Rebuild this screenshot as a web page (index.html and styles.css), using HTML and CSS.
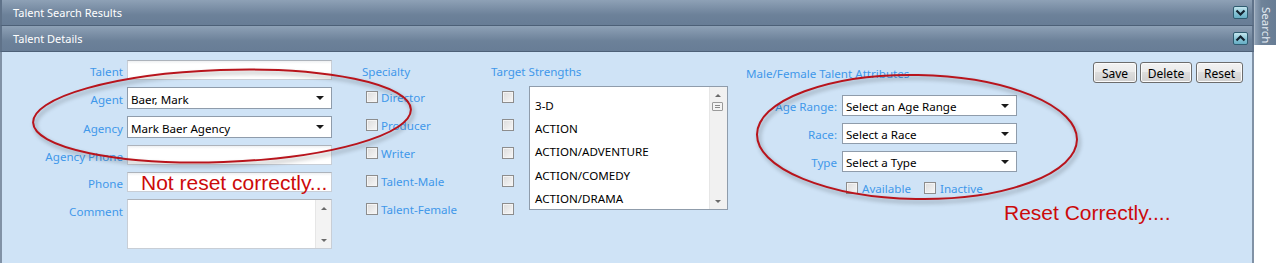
FILE: index.html
```html
<!DOCTYPE html>
<html>
<head>
<meta charset="utf-8">
<title>Talent Details</title>
<link rel="stylesheet" href="styles.css">
</head>
<body>
<div class="page">
  <div class="main">
    <div class="bar">
      <span class="bar-title">Talent Search Results</span>
      <span class="toggle"><svg width="15" height="13" viewBox="0 0 15 13"><polyline points="3.5,4.5 7.5,8.5 11.5,4.5" fill="none" stroke="#13222f" stroke-width="2.2"/></svg></span>
    </div>
    <div class="bar">
      <span class="bar-title">Talent Details</span>
      <span class="toggle"><svg width="15" height="13" viewBox="0 0 15 13"><polyline points="3.5,8.5 7.5,4.5 11.5,8.5" fill="none" stroke="#13222f" stroke-width="2.2"/></svg></span>
    </div>
    <div class="content">
      <div class="col-form">
        <span class="lbl">Talent</span>
        <div class="field input"></div>
        <span class="lbl">Agent</span>
        <div class="field select"><span class="val">Baer, Mark</span><i class="arrow"></i></div>
        <span class="lbl">Agency</span>
        <div class="field select"><span class="val">Mark Baer Agency</span><i class="arrow"></i></div>
        <span class="lbl">Agency Phone</span>
        <div class="field input"></div>
        <span class="lbl">Phone</span>
        <div class="field input"></div>
        <span class="lbl lbl-top">Comment</span>
        <div class="field textarea">
          <div class="vscroll small"><i class="up"></i><i class="down"></i></div>
        </div>
      </div>

      <div class="col-spec">
        <div class="col-title">Specialty</div>
        <div class="chk-row"><span class="chk"></span><span class="chk-lbl">Director</span></div>
        <div class="chk-row"><span class="chk"></span><span class="chk-lbl">Producer</span></div>
        <div class="chk-row"><span class="chk"></span><span class="chk-lbl">Writer</span></div>
        <div class="chk-row"><span class="chk"></span><span class="chk-lbl">Talent-Male</span></div>
        <div class="chk-row"><span class="chk"></span><span class="chk-lbl">Talent-Female</span></div>
      </div>

      <div class="col-target">
        <div class="col-title">Target Strengths</div>
        <div class="target-body">
          <div class="chk-col">
            <div class="chk-row"><span class="chk"></span></div>
            <div class="chk-row"><span class="chk"></span></div>
            <div class="chk-row"><span class="chk"></span></div>
            <div class="chk-row"><span class="chk"></span></div>
            <div class="chk-row"><span class="chk"></span></div>
          </div>
          <div class="listbox">
            <ul class="items">
              <li>3-D</li>
              <li>ACTION</li>
              <li>ACTION/ADVENTURE</li>
              <li>ACTION/COMEDY</li>
              <li>ACTION/DRAMA</li>
            </ul>
            <div class="vscroll"><i class="up"></i><i class="thumb"></i><i class="down"></i></div>
          </div>
        </div>
      </div>

      <div class="col-attr">
        <div class="col-title attr-title">Male/Female Talent Attributes</div>
        <div class="attr-grid">
          <span class="lbl">Age Range:</span>
          <div class="field select"><span class="val">Select an Age Range</span><i class="arrow"></i></div>
          <span class="lbl">Race:</span>
          <div class="field select"><span class="val">Select a Race</span><i class="arrow"></i></div>
          <span class="lbl">Type</span>
          <div class="field select"><span class="val">Select a Type</span><i class="arrow"></i></div>
        </div>
        <div class="attr-checks">
          <span class="chk"></span><span class="chk-lbl">Available</span>
          <span class="chk chk-2"></span><span class="chk-lbl">Inactive</span>
        </div>
      </div>

      <div class="col-btns">
        <button class="btn btn-save">Save</button>
        <button class="btn btn-delete">Delete</button>
        <button class="btn btn-reset">Reset</button>
      </div>
    </div>
  </div>
  <div class="side">
    <div class="side-tab"><span>Search</span></div>
  </div>

  <svg class="annot" width="1276" height="263" viewBox="0 0 1276 263">
    <ellipse cx="222" cy="116" rx="189" ry="46" transform="rotate(-2 222 116)" fill="none" stroke="#b8141c" stroke-width="2"/>
    <ellipse cx="917" cy="137" rx="160" ry="62" transform="rotate(1 917 137)" fill="none" stroke="#b8141c" stroke-width="2"/>
  </svg>
  <div class="note note-left">Not reset correctly...</div>
  <div class="note note-right">Reset Correctly....</div>
</div>
</body>
</html>
```

FILE: styles.css
```css
html, body {
  margin: 0;
  padding: 0;
  background: #ffffff;
}
body {
  font-family: "Noto Sans", "Open Sans", sans-serif;
  font-size: 11.6px;
  color: #000;
}
.page {
  position: relative;
  width: 1276px;
  height: 263px;
  display: flex;
  overflow: hidden;
}
.main {
  width: 1254px;
  display: flex;
  flex-direction: column;
}
.bar {
  height: 26px;
  box-sizing: border-box;
  border-bottom: 1px solid #4d6077;
  border-left: 2px solid #5f7289;
  border-right: 2px solid #5f7289;
  background: linear-gradient(#8ea1b6 0%, #7a8ea5 35%, #6c8199 60%, #687d96 100%);
  display: flex;
  align-items: center;
  justify-content: space-between;
  padding: 0 4px 0 11px;
}
.bar-title {
  color: #ffffff;
  font-size: 11px;
  line-height: 16px;
  padding-top: 1px;
}
.toggle {
  width: 15px;
  height: 13px;
  box-sizing: border-box;
  border: 1px solid #2f5c70;
  border-radius: 2px;
  background: linear-gradient(#c4e6ee, #8cc7d8 50%, #66adc4);
  display: flex;
}
.toggle svg {
  margin: -1px;
}
.content {
  flex: 1;
  background: #cfe3f6;
  border-left: 2px solid #8192a6;
  border-right: 2px solid #8192a6;
  display: flex;
  align-items: flex-start;
}

/* form column */
.col-form {
  display: grid;
  grid-template-columns: 121px 205px;
  column-gap: 4px;
  row-gap: 7px;
  padding-top: 8px;
  align-items: center;
}
.lbl {
  color: #3f98ea;
  text-align: right;
  white-space: nowrap;
  line-height: 16px;
  padding-top: 3px;
}
.lbl-top {
  align-self: start;
  padding-top: 5px;
}
.field {
  box-sizing: border-box;
  background: #ffffff;
  border: 1px solid #c8ced6;
  border-top-color: #adb3bb;
  position: relative;
}
.input {
  height: 20px;
  background: linear-gradient(#eef0f2 0px, #ffffff 3px);
}
.select {
  height: 22px;
  border: 1px solid #8f9cab;
  display: flex;
  align-items: center;
  padding-left: 3px;
}
.val {
  line-height: 16px;
  white-space: nowrap;
  padding-top: 3px;
}
.arrow {
  position: absolute;
  right: 7px;
  top: 8px;
  width: 0;
  height: 0;
  border-left: 4px solid transparent;
  border-right: 4px solid transparent;
  border-top: 4px solid #1a1a1a;
}
.textarea {
  height: 50px;
  display: flex;
  justify-content: flex-end;
}
.vscroll {
  width: 17px;
  background: #f1f1f1;
  border-left: 1px solid #e6e6e6;
  position: relative;
}
.vscroll .up, .vscroll .down {
  position: absolute;
  left: 5px;
  width: 0;
  height: 0;
  border-left: 3px solid transparent;
  border-right: 3px solid transparent;
}
.vscroll .up {
  top: 7px;
  border-bottom: 3px solid #6a6a6a;
}
.vscroll .down {
  bottom: 6px;
  border-top: 3px solid #6a6a6a;
}
.vscroll.small {
  width: 15px;
  background: #f3f3f3;
}
.vscroll .thumb {
  position: absolute;
  left: 2px;
  top: 15px;
  width: 11px;
  height: 9px;
  box-sizing: border-box;
  border: 1px solid #9a9a9a;
  border-radius: 1px;
  background: repeating-linear-gradient(#f4f4f4 0px, #f4f4f4 1px, #8a8a8a 1px, #8a8a8a 2px) center / 5px 5px no-repeat, #f4f4f4;
}

/* specialty */
.col-spec {
  margin-left: 30px;
  width: 129px;
  padding-top: 12px;
}
.col-title {
  color: #3f98ea;
  line-height: 16px;
  margin-bottom: 3px;
  white-space: nowrap;
}
.chk-row {
  height: 28px;
  display: flex;
  align-items: center;
  padding-left: 4px;
}
.chk {
  width: 12px;
  height: 12px;
  box-sizing: border-box;
  border: 1px solid #8d8d8d;
  background: linear-gradient(135deg, #dcdcdc, #f7f7f7);
  box-shadow: inset 0 0 0 1px #f4f4f4;
  flex: none;
}
.chk-lbl {
  color: #3f98ea;
  margin-left: 3px;
  line-height: 16px;
  white-space: nowrap;
  padding-top: 2px;
}

/* target strengths */
.col-target {
  width: 255px;
  padding-top: 12px;
}
.target-body {
  display: flex;
  align-items: flex-start;
}
.chk-col {
  width: 38px;
}
.chk-col .chk-row {
  padding-left: 11px;
}
.listbox {
  margin-top: 3px;
  width: 199px;
  height: 124px;
  box-sizing: border-box;
  border: 1px solid #8f9cab;
  background: #ffffff;
  display: flex;
}
.items {
  list-style: none;
  margin: 0;
  padding: 7px 0 0 5px;
  flex: 1;
}
.items li {
  line-height: 23.2px;
  white-space: nowrap;
}

/* attributes */
.col-attr {
  width: 347px;
  padding-top: 14px;
}
.attr-title {
  margin-bottom: 13px;
}
.attr-grid {
  display: grid;
  grid-template-columns: 91px 175px;
  column-gap: 5px;
  row-gap: 7px;
  align-items: center;
}
.attr-grid .select {
  height: 21px;
}
.attr-checks {
  margin-top: 8px;
  margin-left: 100px;
  height: 16px;
  display: flex;
  align-items: center;
}
.attr-checks .chk-lbl {
  margin-left: 4px;
}
.chk-2 {
  margin-left: 13px;
}

/* buttons */
.col-btns {
  padding-top: 10px;
  display: flex;
  gap: 3px;
}
.btn {
  height: 21px;
  margin: 0;
  padding: 1px 0 0;
  font-family: inherit;
  font-size: 12px;
  color: #000;
  border: 1px solid #6c6c6c;
  border-radius: 3px;
  background: linear-gradient(#f2f2f2 0%, #ebebeb 45%, #dddddd 50%, #cfcfcf 100%);
  box-shadow: inset 0 0 0 1px #fbfbfb;
}
.btn-save { width: 44px; }
.btn-delete { width: 52px; }
.btn-reset { width: 47px; margin-left: 1px; }

/* side tab */
.side {
  width: 22px;
  background: #ffffff;
}
.side-tab {
  height: 45px;
  background: linear-gradient(90deg, #8ea0b5, #6f8399 30%, #677c94);
  border-left: 1px solid #a9b6c5;
  display: flex;
  justify-content: center;
  padding-top: 7px;
  box-sizing: border-box;
}
.side-tab span {
  writing-mode: vertical-rl;
  color: #e3eaf2;
  font-size: 11.5px;
  line-height: 14px;
}

/* annotations */
.annot {
  position: absolute;
  left: 0;
  top: 0;
  pointer-events: none;
  filter: drop-shadow(2px 3px 2px rgba(0, 0, 0, 0.35));
}
.note {
  position: absolute;
  font-family: "Liberation Sans", Arial, sans-serif;
  font-size: 21px;
  line-height: 24px;
  color: #cc0a0a;
  white-space: nowrap;
}
.note-left {
  left: 141px;
  top: 171px;
}
.note-right {
  left: 1004px;
  top: 201px;
}
```
